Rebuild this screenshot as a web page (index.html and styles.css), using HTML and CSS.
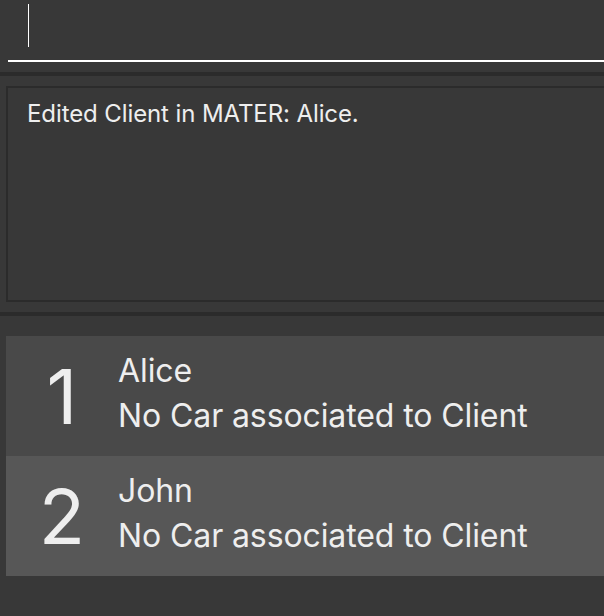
FILE: index.html
```html
<!DOCTYPE html>
<html>
<head>
<meta charset="utf-8">
<link rel="stylesheet" href="styles.css">
</head>
<body>
<div class="app">
  <div class="command">
    <div class="cmd-input"><span class="caret"></span></div>
  </div>
  <div class="sep"></div>
  <div class="result-wrap">
    <div class="result">Edited Client in MATER: Alice.</div>
  </div>
  <div class="sep"></div>
  <div class="list">
    <div class="card card-odd">
      <div class="idx">1</div>
      <div class="info">
        <div class="name">Alice</div>
        <div class="car">No Car associated to Client</div>
      </div>
    </div>
    <div class="card card-even">
      <div class="idx">2</div>
      <div class="info">
        <div class="name">John</div>
        <div class="car">No Car associated to Client</div>
      </div>
    </div>
  </div>
</div>
</body>
</html>
```
FILE: styles.css
```css
html, body {
  margin: 0;
  padding: 0;
  background: #383838;
  width: 604px;
  height: 616px;
  overflow: hidden;
  font-family: Inter, "Open Sans", sans-serif;
  color: #eeeeee;
}
.app {
  display: flex;
  flex-direction: column;
}
.command {
  padding: 0 0 10px 8px;
}
.cmd-input {
  height: 62px;
  box-sizing: border-box;
  border-bottom: 2px solid #ffffff;
  padding: 4px 0 0 20px;
}
.caret {
  display: block;
  width: 1px;
  height: 43px;
  background: #ffffff;
}
.sep {
  height: 4px;
  background: #2b2b2b;
}
.result-wrap {
  padding: 10px 0 10px 6px;
}
.result {
  height: 216px;
  box-sizing: border-box;
  border: 2px solid #2b2b2b;
  border-right: none;
  padding: 11px 0 0 19px;
  font-size: 24px;
  line-height: 30px;
  letter-spacing: -0.1px;
}
.list {
  padding: 20px 0 0 6px;
}
.card {
  height: 120px;
  display: flex;
  align-items: center;
}
.card-odd { background: #494949; }
.card-even { background: #575757; }
.idx {
  width: 112px;
  text-align: center;
  font-size: 76px;
  line-height: 1;
}
.info {
  display: flex;
  flex-direction: column;
  padding-bottom: 6px;
  font-size: 32px;
  line-height: 45px;
  letter-spacing: -0.1px;
}
```
